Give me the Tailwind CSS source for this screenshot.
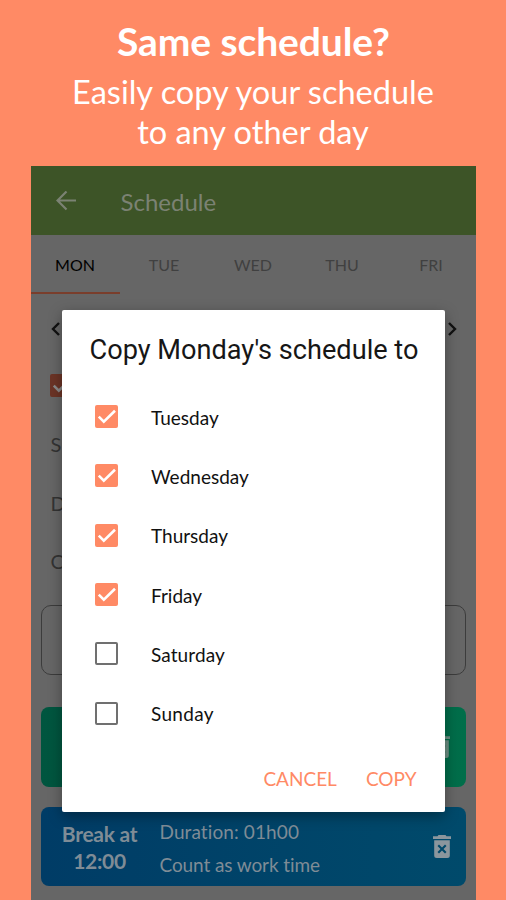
<!DOCTYPE html>
<html lang="en">
<head>
<meta charset="utf-8">
<title>Schedule</title>
<script src="https://cdn.jsdelivr.net/npm/@tailwindcss/browser@4"></script>
</head>
<body class="w-[506px] h-[900px] overflow-hidden bg-[#ff8a65] font-['Lato',sans-serif]">
<svg class="hidden">
  <symbol id="trash" viewBox="0 0 18 23"><path fill-rule="evenodd" d="M5.5 0h7l1 1.3H18v2.600H0V1.300h4.500zM1.200 5.200h15.600v15.300a2.500 2.500 0 0 1-2.500 2.500H3.700a2.500 2.500 0 0 1-2.500-2.500zM4.500 11l3 3-3 3L6 18.500l3-3 3 3 1.500-1.500-3-3 3-3L12 9.500l-3 3-3-3z"/></symbol>
  <symbol id="check" viewBox="0 0 23 23"><path d="M3.800 11.700l5 5L20 5.800" fill="none" stroke="currentColor" stroke-width="2.600"/></symbol>
</svg>
<div class="relative flex flex-col items-center h-[900px]">
  <h1 class="mt-[17px] pl-[1px] h-[48px] leading-[48px] text-[39px] font-bold text-white tracking-[-0.100px]">Same schedule?</h1>
  <p class="mt-[7px] h-[94px] leading-[40px] text-[32.500px] text-white text-center">Easily copy your schedule<br>to any other day</p>

  <div class="w-[445px] h-[734px] bg-[#666666] flex flex-col overflow-hidden">
    <header class="h-[69px] shrink-0 bg-[#3d5427] flex items-center text-[#7b8273]">
      <svg class="ml-[25px] w-[20px] h-[20px]" viewBox="0 0 20 20" fill="none" stroke="currentColor" stroke-width="2.200"><path d="M20 9.500H2M10.500 0.500L1.500 9.500l9 9"/></svg>
      <span class="ml-[45px] pt-[2px] text-[24px]">Schedule</span>
    </header>
    <nav class="flex shrink-0 h-[59px] w-[445px] text-[16px] leading-[60px] text-[#404040] text-center">
      <span class="w-[89px] border-b-[2px] border-[#7a3e2c] text-black">MON</span>
      <span class="w-[89px]">TUE</span>
      <span class="w-[89px]">WED</span>
      <span class="w-[89px]">THU</span>
      <span class="w-[89px]">FRI</span>
    </nav>
    <div class="mt-[28px] pl-[20px] pr-[19px] flex justify-between shrink-0 h-[14px]">
      <svg class="w-[9px] h-[14px]" viewBox="0 0 9 14" fill="none" stroke="#111" stroke-width="2.400"><path d="M8 1L2 7l6 6"/></svg>
      <svg class="w-[9px] h-[14px]" viewBox="0 0 9 14" fill="none" stroke="#111" stroke-width="2.400"><path d="M1 1l6 6-6 6"/></svg>
    </div>
    <div class="mt-[38px] ml-[19px] w-[23px] h-[23px] shrink-0 rounded-[2px] bg-[#6b3426] text-[#8a8a8a]"><svg class="w-[23px] h-[23px]"><use href="#check"/></svg></div>
    <div class="mt-[18px] ml-[20px] shrink-0 text-[20px] leading-[58.500px] text-[#333]">
      <div>S</div><div>D</div><div>C</div>
    </div>
    <div class="mt-[14px] mx-[10px] h-[70px] shrink-0 rounded-[10px] border border-[#3c3c3c]"></div>
    <div class="mt-[32px] mx-[10px] h-[80px] shrink-0 rounded-[8px] bg-linear-to-r from-[#00553f] to-[#006e4a] flex items-center justify-end pr-[16px]">
      <svg class="w-[18px] h-[23px] fill-[#6d8f83]"><use href="#trash"/></svg>
    </div>
    <div class="mt-[20px] mx-[10px] h-[79px] shrink-0 rounded-[8px] bg-linear-to-r from-[#003c66] to-[#004a6b] flex items-center text-[#7f8c96]">
      <div class="ml-[14px] pt-[2px] w-[90px] text-center text-[21px] leading-[27px] font-bold tracking-[-0.300px]">Break at<br>12:00</div>
      <div class="ml-[15px] pt-[3px] text-[19px] leading-[33px]"><span class="tracking-[0.100px]">Duration: 01h00</span><br><span class="tracking-[-0.100px]">Count as work time</span></div>
      <svg class="ml-auto mr-[15px] w-[18px] h-[23px] fill-[#8b969d]"><use href="#trash"/></svg>
    </div>
  </div>

  <section class="absolute left-[62px] top-[310px] w-[383px] h-[502px] bg-white rounded-[2px] shadow-[0_4px_14px_rgba(0,0,0,0.35)] flex flex-col">
    <h2 class="mt-[24px] ml-[27.500px] h-[32px] leading-[32px] text-[27.150px] text-[#161616] font-['Roboto',sans-serif] whitespace-nowrap">Copy Monday's schedule to</h2>
    <ul class="mt-[20.600px] ml-[33px] text-[19px] text-[#111]">
      <li class="h-[59.400px] flex items-center"><span class="w-[23px] h-[23px] rounded-[2px] bg-[#ff8a65] text-white"><svg class="w-[23px] h-[23px]"><use href="#check"/></svg></span><span class="ml-[33px] pt-[3px]">Tuesday</span></li>
      <li class="h-[59.400px] flex items-center"><span class="w-[23px] h-[23px] rounded-[2px] bg-[#ff8a65] text-white"><svg class="w-[23px] h-[23px]"><use href="#check"/></svg></span><span class="ml-[33px] pt-[3px]">Wednesday</span></li>
      <li class="h-[59.400px] flex items-center"><span class="w-[23px] h-[23px] rounded-[2px] bg-[#ff8a65] text-white"><svg class="w-[23px] h-[23px]"><use href="#check"/></svg></span><span class="ml-[33px] pt-[3px]">Thursday</span></li>
      <li class="h-[59.400px] flex items-center"><span class="w-[23px] h-[23px] rounded-[2px] bg-[#ff8a65] text-white"><svg class="w-[23px] h-[23px]"><use href="#check"/></svg></span><span class="ml-[33px] pt-[3px]">Friday</span></li>
      <li class="h-[59.400px] flex items-center"><span class="w-[23px] h-[23px] rounded-[2px] border-2 border-[#707070]"></span><span class="ml-[33px] pt-[3px] tracking-[0.100px]">Saturday</span></li>
      <li class="h-[59.400px] flex items-center"><span class="w-[23px] h-[23px] rounded-[2px] border-2 border-[#707070]"></span><span class="ml-[33px] pt-[3px] tracking-[0.300px]">Sunday</span></li>
    </ul>
    <div class="mt-[20px] pr-[28.500px] flex justify-end gap-[29px] h-[32px] leading-[32px] text-[19px] text-[#ff8a65]">
      <span>CANCEL</span><span>COPY</span>
    </div>
  </section>
</div>
</body>
</html>
